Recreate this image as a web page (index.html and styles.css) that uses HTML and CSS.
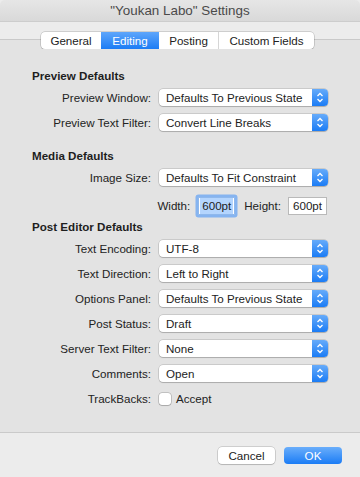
FILE: index.html
```html
<!DOCTYPE html>
<html lang="en">
  <head>
    <meta charset="UTF-8">
    <title>Settings</title>
    <link rel="stylesheet" href="styles.css">
  </head>
  <body>
    <div class="window">
      <div class="titlebar">"Youkan Labo" Settings</div>

      <div class="tabrow">
        <div class="tabs">
          <span class="tab t-general">General</span>
          <span class="tab t-editing active">Editing</span>
          <span class="tab t-posting">Posting</span>
          <span class="tab t-custom">Custom Fields</span>
        </div>
      </div>

      <div class="content">
        <section class="group">
          <h2>Preview Defaults</h2>
          <div class="form">
            <label>Preview Window:</label>
            <div class="popup"><span class="value">Defaults To Previous State</span><span class="stepper"><svg width="16" height="17" viewBox="0 0 16 17"><path d="M5.5 7 L8 4.5 L10.5 7 M5.5 10 L8 12.5 L10.5 10" fill="none" stroke="#fff" stroke-width="1.3"/></svg></span></div>

            <label>Preview Text Filter:</label>
            <div class="popup"><span class="value">Convert Line Breaks</span><span class="stepper"><svg width="16" height="17" viewBox="0 0 16 17"><path d="M5.5 7 L8 4.5 L10.5 7 M5.5 10 L8 12.5 L10.5 10" fill="none" stroke="#fff" stroke-width="1.3"/></svg></span></div>
          </div>
        </section>

        <section class="group media">
          <h2>Media Defaults</h2>
          <div class="form">
            <label>Image Size:</label>
            <div class="popup"><span class="value">Defaults To Fit Constraint</span><span class="stepper"><svg width="16" height="17" viewBox="0 0 16 17"><path d="M5.5 7 L8 4.5 L10.5 7 M5.5 10 L8 12.5 L10.5 10" fill="none" stroke="#fff" stroke-width="1.3"/></svg></span></div>
          </div>
          <div class="size-row">
            <span>Width:</span>
            <span class="field focused"><span class="selected">600pt</span></span>
            <span class="height-label">Height:</span>
            <span class="field">600pt</span>
          </div>
        </section>

        <section class="group post">
          <h2>Post Editor Defaults</h2>
          <div class="form">
            <label>Text Encoding:</label>
            <div class="popup"><span class="value">UTF-8</span><span class="stepper"><svg width="16" height="17" viewBox="0 0 16 17"><path d="M5.5 7 L8 4.5 L10.5 7 M5.5 10 L8 12.5 L10.5 10" fill="none" stroke="#fff" stroke-width="1.3"/></svg></span></div>

            <label>Text Direction:</label>
            <div class="popup"><span class="value">Left to Right</span><span class="stepper"><svg width="16" height="17" viewBox="0 0 16 17"><path d="M5.5 7 L8 4.5 L10.5 7 M5.5 10 L8 12.5 L10.5 10" fill="none" stroke="#fff" stroke-width="1.3"/></svg></span></div>

            <label>Options Panel:</label>
            <div class="popup"><span class="value">Defaults To Previous State</span><span class="stepper"><svg width="16" height="17" viewBox="0 0 16 17"><path d="M5.5 7 L8 4.5 L10.5 7 M5.5 10 L8 12.5 L10.5 10" fill="none" stroke="#fff" stroke-width="1.3"/></svg></span></div>

            <label>Post Status:</label>
            <div class="popup"><span class="value">Draft</span><span class="stepper"><svg width="16" height="17" viewBox="0 0 16 17"><path d="M5.5 7 L8 4.5 L10.5 7 M5.5 10 L8 12.5 L10.5 10" fill="none" stroke="#fff" stroke-width="1.3"/></svg></span></div>

            <label>Server Text Filter:</label>
            <div class="popup"><span class="value">None</span><span class="stepper"><svg width="16" height="17" viewBox="0 0 16 17"><path d="M5.5 7 L8 4.5 L10.5 7 M5.5 10 L8 12.5 L10.5 10" fill="none" stroke="#fff" stroke-width="1.3"/></svg></span></div>

            <label>Comments:</label>
            <div class="popup"><span class="value">Open</span><span class="stepper"><svg width="16" height="17" viewBox="0 0 16 17"><path d="M5.5 7 L8 4.5 L10.5 7 M5.5 10 L8 12.5 L10.5 10" fill="none" stroke="#fff" stroke-width="1.3"/></svg></span></div>

            <label>TrackBacks:</label>
            <div class="check"><span class="box"></span><span>Accept</span></div>
          </div>
        </section>
      </div>

      <div class="footer">
        <button class="cancel">Cancel</button>
        <button class="ok">OK</button>
      </div>
    </div>
  </body>
</html>
```

FILE: styles.css
```css
* {
  margin: 0;
  padding: 0;
  box-sizing: border-box;
}

body {
  width: 360px;
  height: 477px;
  overflow: hidden;
  font-family: "Liberation Sans", Arial, sans-serif;
  font-size: 11.6px;
  color: #222222;
  background: #ececec;
}

.window {
  display: flex;
  flex-direction: column;
  height: 477px;
}

.titlebar {
  height: 22px;
  line-height: 22px;
  text-align: center;
  font-size: 13.4px;
  color: #4a4a4a;
  background: linear-gradient(#e6e6e6, #d9d9d9);
  border-bottom: 1px solid #cdcdcd;
  border-radius: 5px 5px 0 0;
}

.tabrow {
  height: 27px;
  padding: 10px 0 0 41px;
  background: linear-gradient(#ececec 0, #ececec 17px, #c9c9c9 17px, #c9c9c9 18px, #e3e3e3 18px);
}

.tabs {
  display: flex;
  width: 273px;
  height: 17px;
  background: #ffffff;
  border-radius: 4px;
  box-shadow: 0 0 0 0.5px rgba(0, 0, 0, 0.25), 0 1px 1px rgba(0, 0, 0, 0.12);
  overflow: hidden;
}

.tab {
  line-height: 17px;
  text-align: center;
  border-left: 1px solid #d6d6d6;
}

.tab:first-child {
  border-left: none;
}

.t-general { width: 60px; }
.t-editing { width: 58px; }
.t-posting { width: 59px; }
.t-custom { width: 96px; }

.tab.active {
  color: #ffffff;
  border-left: none;
  background: linear-gradient(#5ea6fb, #1c7cf5);
}

.tab.active + .tab {
  border-left: none;
}

.content {
  flex-grow: 1;
  padding-top: 20px;
  background: #e3e3e3;
  border-bottom: 1px solid #cacaca;
}

.group h2 {
  height: 14px;
  line-height: 14px;
  margin-bottom: 2px;
  padding-left: 32px;
  font-size: 11.6px;
  font-weight: bold;
  color: #1e1e1e;
}

.group.media {
  margin-top: 14px;
}

.group.post {
  margin-top: 2px;
}

.form {
  display: grid;
  grid-template-columns: 151px 169px;
  grid-auto-rows: 25px;
  column-gap: 8px;
  align-items: center;
}

.form label {
  text-align: right;
}

.popup {
  display: flex;
  height: 17px;
  background: #ffffff;
  border-radius: 4px;
  box-shadow: 0 0 0 0.5px rgba(0, 0, 0, 0.22), 0 1px 1px rgba(0, 0, 0, 0.15);
  overflow: hidden;
}

.popup .value {
  flex-grow: 1;
  padding-left: 7px;
  line-height: 17px;
  white-space: nowrap;
}

.popup .stepper {
  width: 16px;
  background: linear-gradient(#66abfa, #1b7cf5);
}

.popup .stepper svg {
  display: block;
}

.size-row {
  display: flex;
  justify-content: flex-end;
  align-items: center;
  height: 25px;
  margin-top: 3px;
  padding-right: 33px;
}

.field {
  height: 18px;
  line-height: 16px;
  padding: 0 4px;
  background: #ffffff;
  border: 1px solid #b9b9b9;
}

.field.focused {
  margin-left: 8px;
  padding: 0 1px;
  border-color: #8fb8ec;
  border-radius: 1px;
  box-shadow: 0 0 0 2.5px #86b4f0;
}

.field .selected {
  display: inline-block;
  padding: 0 2px;
  background: #b4d5fe;
}

.height-label {
  margin: 0 7px 0 9px;
}

.check {
  display: flex;
  align-items: center;
}

.check .box {
  width: 12px;
  height: 12px;
  margin-right: 5px;
  background: #ffffff;
  border-radius: 3px;
  box-shadow: 0 0 0 0.5px rgba(0, 0, 0, 0.3), 0 1px 1px rgba(0, 0, 0, 0.12);
}

.footer {
  display: flex;
  justify-content: flex-end;
  align-items: flex-start;
  height: 44px;
  padding: 14px 18px 0 0;
  gap: 9px;
}

.footer button {
  height: 17px;
  font-family: inherit;
  font-size: 11.6px;
  border: none;
  border-radius: 4px;
}

.cancel {
  width: 57px;
  color: #222222;
  background: #ffffff;
  box-shadow: 0 0 0 0.5px rgba(0, 0, 0, 0.25), 0 1px 1px rgba(0, 0, 0, 0.12);
}

.ok {
  width: 58px;
  color: #ffffff;
  background: linear-gradient(#6aaefb, #1b7cf5);
}
```
